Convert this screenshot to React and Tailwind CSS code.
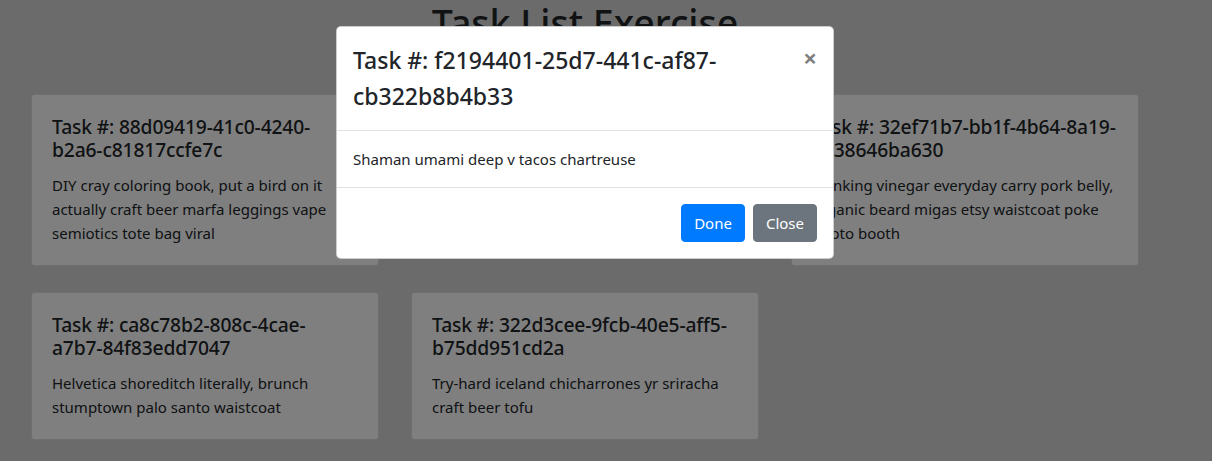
import React from "react";

const tasks = [
  { id: ["88d09419-41c0-4240-", "b2a6-c81817ccfe7c"], text: "DIY cray coloring book, put a bird on it actually craft beer marfa leggings vape semiotics tote bag viral" },
  { id: ["f2194401-25d7-441c-af87-", "cb322b8b4b33"], text: "Shaman umami deep v tacos chartreuse" },
  { id: ["32ef71b7-bb1f-4b64-8a19-", "e238646ba630"], text: "Drinking vinegar everyday carry pork belly, organic beard migas etsy waistcoat poke photo booth" },
  { id: ["ca8c78b2-808c-4cae-", "a7b7-84f83edd7047"], text: "Helvetica shoreditch literally, brunch stumptown palo santo waistcoat" },
  { id: ["322d3cee-9fcb-40e5-aff5-", "b75dd951cd2a"], text: "Try-hard iceland chicharrones yr sriracha craft beer tofu" },
];

function Card({ task }) {
  return (
    <div className="w-[348px] bg-white border border-black/[0.125] rounded-[4px] p-5">
      <h5 className="text-[19.25px] leading-[23px] tracking-[-0.15px] font-medium mb-3 text-[#212529] whitespace-nowrap">
        Task #: {task.id[0]}
        <br />
        {task.id[1]}
      </h5>
      <p className="text-[15px] leading-[24px] text-[#212529]">{task.text}</p>
    </div>
  );
}

export default function App() {
  return (
    <div
      className="relative w-[1212px] h-[461px] overflow-hidden bg-[#d6d6d6]"
      style={{ fontFamily: '"Noto Sans", "Open Sans", sans-serif' }}
    >
      <div className="w-[1170px]">
        <h1 className="text-center text-[37.5px] leading-[45px] font-medium text-[#212529] pt-0 mb-[49px]">
          Task List Exercise
        </h1>
        <div className="pl-[31px] grid grid-cols-[348px_348px_348px] items-start gap-x-[32px] gap-y-[26px]">
          {tasks.map((t) => (
            <Card key={t.id[0]} task={t} />
          ))}
        </div>
      </div>

      <div className="absolute inset-0 bg-black/50" />

      <div className="absolute left-[336px] top-[26px] w-[498px] bg-white border border-black/20 rounded-[5px]">
        <div className="flex items-start justify-between p-4 border-b border-[#dee2e6]">
          <h5 className="text-[23px] leading-[35.5px] font-medium text-[#212529] w-[380px]">
            Task #: f2194401-25d7-441c-af87-cb322b8b4b33
          </h5>
          <button className="text-[24px] leading-[24px] font-bold text-black opacity-50 mt-[3px] p-0">
            ×
          </button>
        </div>
        <div className="p-4 text-[15px] leading-[24px] text-[#212529] border-b border-[#dee2e6]">
          Shaman umami deep v tacos chartreuse
        </div>
        <div className="flex justify-end items-center p-3">
          <button className="m-1 h-[38px] px-3 rounded-[4px] bg-[#007bff] border border-[#007bff] text-white text-[15px] leading-[24px]">
            Done
          </button>
          <button className="m-1 h-[38px] px-3 rounded-[4px] bg-[#6c757d] border border-[#6c757d] text-white text-[15px] leading-[24px]">
            Close
          </button>
        </div>
      </div>
    </div>
  );
}
